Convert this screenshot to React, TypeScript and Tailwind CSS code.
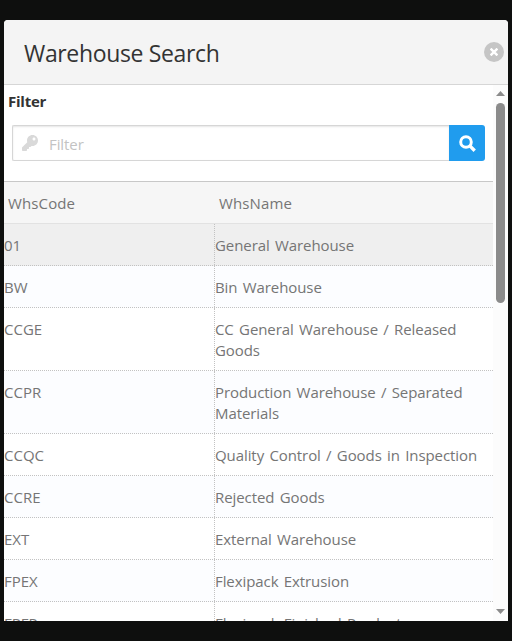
import React from "react";

type Warehouse = { code: string; name: string };

const warehouses: Warehouse[] = [
  { code: "01", name: "General Warehouse" },
  { code: "BW", name: "Bin Warehouse" },
  { code: "CCGE", name: "CC General Warehouse / Released Goods" },
  { code: "CCPR", name: "Production Warehouse / Separated Materials" },
  { code: "CCQC", name: "Quality Control / Goods in Inspection" },
  { code: "CCRE", name: "Rejected Goods" },
  { code: "EXT", name: "External Warehouse" },
  { code: "FPEX", name: "Flexipack Extrusion" },
  { code: "FPFP", name: "Flexipack Finished Product" },
];

function rowColor(index: number) {
  if (index === 0) return "bg-[#efefef]";
  return index % 2 === 1 ? "bg-[#fcfdff]" : "bg-white";
}

function KeyIcon() {
  return (
    <svg width="16" height="16" viewBox="0 0 512 512" fill="#d9d9d9" className="shrink-0">
      <path d="M512 176.001C512 273.203 433.202 352 336 352c-11.22 0-22.19-1.062-32.827-3.069l-24.012 27.014A23.999 23.999 0 0 1 261.223 384H224v40c0 13.255-10.745 24-24 24h-40v40c0 13.255-10.745 24-24 24H24c-13.255 0-24-10.745-24-24v-78.059c0-6.365 2.529-12.47 7.029-16.971l161.802-161.802C163.108 213.814 160 195.271 160 176 160 78.798 238.797.001 335.999 0 433.488-.001 512 78.511 512 176.001zM336 128c0 26.51 21.49 48 48 48s48-21.49 48-48-21.49-48-48-48-48 21.49-48 48z" />
    </svg>
  );
}

function SearchIcon() {
  return (
    <svg width="17" height="17" viewBox="0 0 17 17" fill="none" stroke="#fff">
      <circle cx="7" cy="7" r="5.3" strokeWidth="3" />
      <path d="M10.9 10.9L15.7 15.7" strokeWidth="3.4" />
    </svg>
  );
}

export default function App() {
  return (
    <div className="h-[641px] w-[512px] overflow-hidden bg-[#0e0f0e] px-1 pt-5 font-['Open_Sans','Noto_Sans',sans-serif]">
      <div className="flex h-[601px] flex-col overflow-hidden rounded-t-[4px] bg-white">
        <header className="flex h-[65px] shrink-0 items-center justify-between border-b border-[#d6d6d6] bg-[#f4f4f4] pr-1 pl-5">
          <h1 className="mt-[3px] text-[23px] tracking-[-0.35px] text-[#333]">Warehouse Search</h1>
          <button className="flex size-5 items-center justify-center rounded-full bg-[#c5c5c5]" aria-label="Close">
            <svg width="8" height="8" viewBox="0 0 8 8" stroke="#fff" strokeWidth="2.4">
              <path d="M0.6 0.6L7.4 7.4M7.4 0.6L0.6 7.4" />
            </svg>
          </button>
        </header>

        <div className="flex min-h-0 flex-1">
          <main className="w-[489px] overflow-hidden text-[15px] tracking-[-0.08px] text-[#757575] [word-spacing:1.5px]">
            <label className="block h-[40px] pt-[6px] pl-1 text-[15px] leading-[21px] font-bold tracking-[-0.25px] text-[#333]">
              Filter
            </label>
            <div className="mx-2 flex h-9">
              <div className="flex flex-1 items-center rounded-l-[2px] border border-r-0 border-[#d6d6d6] pl-[9px] shadow-[inset_0_1px_2px_rgba(0,0,0,0.1)]">
                <KeyIcon />
                <span className="mt-[2px] ml-[11px] text-[#c3c3c3]">Filter</span>
              </div>
              <button className="flex w-9 items-center justify-center rounded-r-[3px] bg-[#209cee]" aria-label="Search">
                <SearchIcon />
              </button>
            </div>

            <div className="mt-5 grid h-[43px] grid-cols-[211px_1fr] border-t border-b border-t-[#c8c8c8] border-b-[#e2e2e2] bg-[#f6f6f6] pt-[11px] leading-[21px] tracking-[0.12px]">
              <div className="pl-1">WhsCode</div>
              <div className="pl-1">WhsName</div>
            </div>

            {warehouses.map((row, index) => (
              <div
                key={row.code}
                className={`grid grid-cols-[211px_1fr] border-b border-dotted border-[#c2c2c2] leading-[21px] ${rowColor(index)}`}
              >
                <div className="border-r border-dotted border-[#c2c2c2] pt-[11px] pb-[9px] tracking-normal">{row.code}</div>
                <div className="pt-[11px] pb-[9px]">{row.name}</div>
              </div>
            ))}
          </main>

          <div className="flex w-[15px] flex-col items-center bg-[#fcfcfc]">
            <svg width="9" height="5" viewBox="0 0 9 5" fill="#8b8b8b" className="mt-[6px] shrink-0">
              <path d="M4.5 0L9 5H0z" />
            </svg>
            <div className="mt-[7px] h-[200px] w-[9px] rounded-full bg-[#8b8b8b]" />
            <svg width="9" height="5" viewBox="0 0 9 5" fill="#8b8b8b" className="mt-auto mb-[7px] shrink-0">
              <path d="M0 0h9L4.5 5z" />
            </svg>
          </div>
        </div>
      </div>
    </div>
  );
}
